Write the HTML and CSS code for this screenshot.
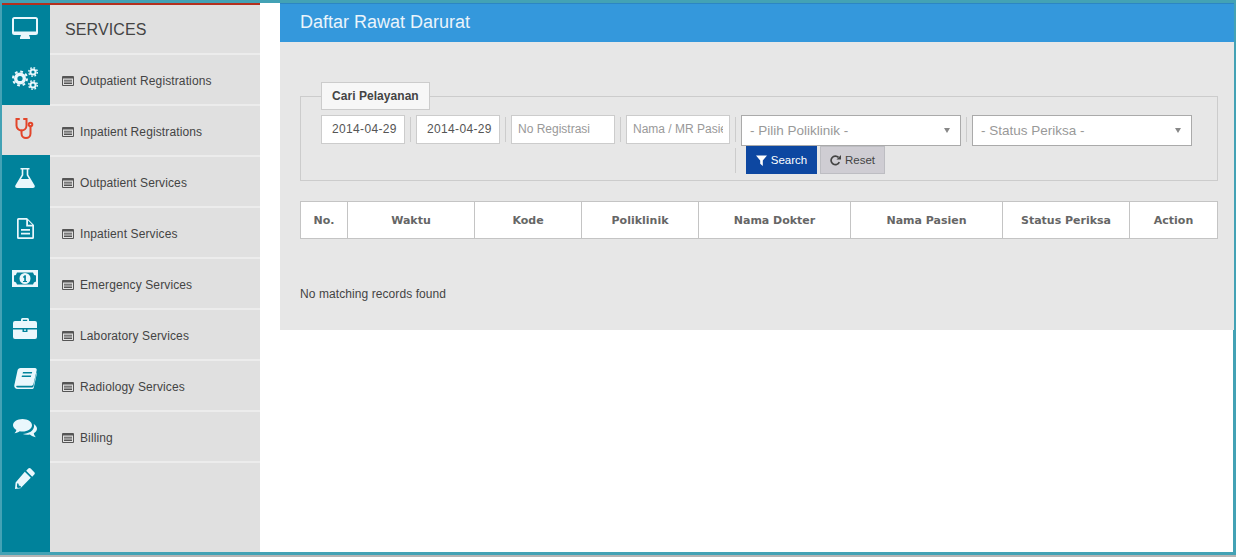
FILE: index.html
```html
<!DOCTYPE html>
<html lang="en">
<head>
    <meta charset="UTF-8">
    <title>Daftar Rawat Darurat</title>
    <link rel="stylesheet" href="styles.css">
</head>
<body>
    <svg class="defs" width="0" height="0">
        <symbol id="list-alt" viewBox="0 0 12 10">
            <path fill-rule="evenodd" d="M1 0h10a1 1 0 0 1 1 1v8a1 1 0 0 1-1 1H1a1 1 0 0 1-1-1V1a1 1 0 0 1 1-1zM1 2.500v6.500h10V2.500zM2 3.800h8v1H2zM2 5.400h8v1H2zM2 7h8v1H2z"/>
        </symbol>
    </svg>
    <div class="frame">
        <aside class="sidebar">
            <nav class="rail">
                <a class="rail-item">
                    <svg width="26" height="22" viewBox="0 0 26 22"><path fill-rule="evenodd" d="M2.500 0h21A2.500 2.500 0 0 1 26 2.500v13a2.500 2.500 0 0 1-2.500 2.500H17l1 2.500v1.500H8v-1.500L9 18H2.500A2.500 2.500 0 0 1 0 15.500v-13A2.500 2.500 0 0 1 2.500 0zM2 2v12.500h22V2z"/></svg>
                </a>
                <a class="rail-item">
                    <svg width="26" height="24" viewBox="0 0 26 24">
                        <g fill="none" stroke="#eaf7fc">
                            <circle cx="8" cy="12.500" r="4.300" stroke-width="3.400"/>
                            <circle cx="8" cy="12.500" r="7" stroke-width="2" stroke-dasharray="2.750 2.750"/>
                            <circle cx="21" cy="6" r="2.600" stroke-width="2"/>
                            <circle cx="21" cy="6" r="4.300" stroke-width="1.400" stroke-dasharray="1.690 1.690"/>
                            <circle cx="21" cy="19" r="2.600" stroke-width="2"/>
                            <circle cx="21" cy="19" r="4.300" stroke-width="1.400" stroke-dasharray="1.690 1.690"/>
                        </g>
                    </svg>
                </a>
                <a class="rail-item active">
                    <svg width="20" height="21" viewBox="0 0 20 21"><g fill="none" stroke="#e2452a" stroke-width="2" stroke-linecap="round"><path d="M4 1H1.500v6.500a5 5 0 0 0 10 0V1H9"/><path d="M6.500 12.500v3a4.500 4.500 0 0 0 9 0V8.500"/><circle cx="15.500" cy="6.500" r="1.800"/></g></svg>
                </a>
                <a class="rail-item">
                    <svg width="20" height="20" viewBox="0 0 20 20"><path fill-rule="evenodd" d="M5.500 0h9v1.500H13.300v5.200l6.200 10.500c.8 1.400 0 2.800-1.500 2.800H2c-1.500 0-2.300-1.400-1.500-2.800L6.700 6.700V1.500H5.500zM8.300 1.500v5.700L6 11h8l-2.300-3.800V1.500z"/></svg>
                </a>
                <a class="rail-item">
                    <svg width="17" height="21" viewBox="0 0 17 21"><path fill-rule="evenodd" d="M1.500 0H10l7 7v12.500a1.500 1.500 0 0 1-1.500 1.500h-14A1.500 1.500 0 0 1 0 19.500v-18A1.500 1.500 0 0 1 1.500 0zM1.700 1.700v17.600h13.600V8.500H9.200V1.700zM11 2.500v4.300h4.300zM4 11h9v1.700H4zM4 14.700h9v1.700H4z"/></svg>
                </a>
                <a class="rail-item">
                    <svg width="26" height="17" viewBox="0 0 26 17"><path fill-rule="evenodd" d="M0 0h26v17H0zM5 2.500A3.500 3.500 0 0 1 2 5.500v6A3.500 3.500 0 0 1 5 14.500h16a3.500 3.500 0 0 1 3-3v-6a3.500 3.500 0 0 1-3-3zM13 3a5.500 5.500 0 1 1 0 11 5.500 5.500 0 0 1 0-11zM11.200 6.500v1.200h1V11H11v1.100h4V11h-1.100V5.200h-1.300z"/></svg>
                </a>
                <a class="rail-item">
                    <svg width="24" height="21" viewBox="0 0 24 21"><path fill-rule="evenodd" d="M8 3V1.500A1.500 1.500 0 0 1 9.500 0h5A1.500 1.500 0 0 1 16 1.500V3h6a2 2 0 0 1 2 2v5H0V5a2 2 0 0 1 2-2zM9.800 1.800V3h4.400V1.800zM0 11.500h9.500V14h5v-2.500H24V19a2 2 0 0 1-2 2H2a2 2 0 0 1-2-2zM11 11.500h2v1.200h-2z"/></svg>
                </a>
                <a class="rail-item">
                    <svg width="23" height="21" viewBox="0 0 23 21"><path fill-rule="evenodd" d="M6.500 0H21c1.300 0 2 1 1.700 2.300L19.500 16c-.3 1.200-1.200 1.800-2.500 1.800H3.200c-.8 0-1.300.7-.8 1.200.3.300.8.400 1.300.400H18c.7 0 1.200-.4 1.400-1l3.200-13.900.4.500-3.200 14.500c-.2 1-1 1.500-2 1.500H3.500C1.200 21 0 19.300.3 17.300L3.500 2.500C3.800 1 5 0 6.500 0zM9 4l-.4 1.500h9.200L18.200 4zM8 7.500l-.4 1.500h9.200l.4-1.500z"/></svg>
                </a>
                <a class="rail-item">
                    <svg width="24" height="19" viewBox="0 0 24 19"><path d="M9.500 0C14.700 0 19 2.800 19 6.300s-4.300 6.300-9.500 6.300c-1 0-1.900-.1-2.800-.3C5.300 13.400 3.500 14 1.500 14.300c1-1.100 1.700-2.200 1.900-3.400C1.300 9.700 0 8.100 0 6.300 0 2.800 4.300 0 9.500 0z"/><path d="M20.300 4.800C22.500 6 24 7.800 24 9.800c0 1.800-1.200 3.400-3.200 4.500.2 1.500.9 2.700 2 3.900-2.300-.3-4.300-1.200-5.900-2.700-.9.200-1.900.3-2.900.3-1.600 0-3-.3-4.200-.8 5.800-.2 11.500-3 11.300-8.700 0-.5-.2-1-.8-1.500z"/></svg>
                </a>
                <a class="rail-item">
                    <svg width="20" height="21" viewBox="0 0 20 21"><path fill-rule="evenodd" d="M14.500 0c.5 0 .9.200 1.200.5l3.600 3.700c.7.700.7 1.700 0 2.400l-2.100 2.100-6-6L13.300.5c.3-.3.700-.5 1.200-.5zM9.800 3.700l6 6.100L5.500 20.300 0 21l.6-6.500zM2.200 15.300l-.3 3.600 1.100 1 3.200-.4-.6-1.600-1.800-.3-.2-1.900z"/></svg>
                </a>
            </nav>
            <div class="menu">
                <h2 class="menu-title">SERVICES</h2>
                <a class="menu-item"><svg class="list-icon"><use href="#list-alt"/></svg>Outpatient Registrations</a>
                <a class="menu-item"><svg class="list-icon"><use href="#list-alt"/></svg>Inpatient Registrations</a>
                <a class="menu-item"><svg class="list-icon"><use href="#list-alt"/></svg>Outpatient Services</a>
                <a class="menu-item"><svg class="list-icon"><use href="#list-alt"/></svg>Inpatient Services</a>
                <a class="menu-item"><svg class="list-icon"><use href="#list-alt"/></svg>Emergency Services</a>
                <a class="menu-item"><svg class="list-icon"><use href="#list-alt"/></svg>Laboratory Services</a>
                <a class="menu-item"><svg class="list-icon"><use href="#list-alt"/></svg>Radiology Services</a>
                <a class="menu-item"><svg class="list-icon"><use href="#list-alt"/></svg>Billing</a>
            </div>
        </aside>
        <main class="content">
            <header class="page-header">
                <h1>Daftar Rawat Darurat</h1>
            </header>
            <section class="panel">
                <fieldset class="filter">
                    <legend>Cari Pelayanan</legend>
                    <div class="filter-row">
                        <input class="field field-date" type="text" value="2014-04-29">
                        <span class="sep"></span>
                        <input class="field field-date" type="text" value="2014-04-29">
                        <span class="sep"></span>
                        <input class="field field-text" type="text" placeholder="No Registrasi">
                        <span class="sep"></span>
                        <input class="field field-text" type="text" placeholder="Nama / MR Pasien">
                        <span class="sep"></span>
                        <div class="select"><span>- Pilih Poliklinik -</span><i class="caret"></i></div>
                        <span class="sep"></span>
                        <div class="select"><span>- Status Periksa -</span><i class="caret"></i></div>
                    </div>
                    <div class="filter-row filter-actions">
                        <span class="sep"></span>
                        <button class="btn btn-search" type="button">
                            <svg width="11" height="11" viewBox="0 0 11 11"><path fill="#fff" d="M0 .5h11L6.800 5.500V11L4.200 8.800V5.500z"/></svg>Search
                        </button>
                        <button class="btn btn-reset" type="button">
                            <svg width="11" height="11" viewBox="0 0 11 11"><path fill="none" stroke="#444" stroke-width="1.700" d="M9.300 7.200A4.300 4.300 0 1 1 8.500 2.400"/><path fill="#444" d="M11 0v4.500H6.500z"/></svg>Reset
                        </button>
                    </div>
                </fieldset>
                <table class="records">
                    <thead>
                        <tr>
                            <th class="col-no">No.</th>
                            <th class="col-waktu">Waktu</th>
                            <th class="col-kode">Kode</th>
                            <th class="col-poli">Poliklinik</th>
                            <th class="col-nama">Nama Dokter</th>
                            <th class="col-nama">Nama Pasien</th>
                            <th class="col-waktu">Status Periksa</th>
                            <th class="col-action">Action</th>
                        </tr>
                    </thead>
                </table>
                <p class="empty">No matching records found</p>
            </section>
        </main>
    </div>
</body>
</html>
```

FILE: styles.css
```css
html, body, h1, h2, p, fieldset, legend {
    margin: 0;
    padding: 0;
}

body {
    font-family: "Liberation Sans", Arial, sans-serif;
    background-color: #b4b4b4;
    color: #444;
    height: 557px;
    overflow: hidden;
}

.defs {
    position: absolute;
}

.frame {
    display: flex;
    box-sizing: border-box;
    height: 555px;
    border-style: solid;
    border-color: #43a2b5;
    border-width: 3px 3px 3px 2px;
    background-color: #fff;
}

.sidebar {
    display: flex;
    flex-shrink: 0;
    width: 258px;
    border-top: 2px solid #b5301e;
}

.rail {
    width: 48px;
    background-color: #00829b;
}

.rail-item {
    display: flex;
    align-items: center;
    justify-content: center;
    box-sizing: border-box;
    height: 50px;
    padding-bottom: 4px;
    padding-right: 2px;
}

.rail-item svg {
    fill: #eaf7fc;
}

.rail-item.active {
    background-color: #e0e0e0;
}

.menu {
    flex: 1;
    background-color: #e0e0e0;
}

.menu-title {
    box-sizing: border-box;
    height: 50px;
    padding: 15px 0 0 15px;
    font-size: 16px;
    font-weight: normal;
    line-height: 20px;
    letter-spacing: .1px;
    color: #444;
    border-bottom: 2px solid #ececec;
}

.menu-item {
    display: flex;
    align-items: center;
    box-sizing: border-box;
    height: 51px;
    padding: 2px 0 0 12px;
    font-size: 12px;
    letter-spacing: .12px;
    color: #444;
    border-bottom: 2px solid #ececec;
}

.list-icon {
    width: 12px;
    height: 10px;
    margin-right: 6px;
    fill: #555;
}

.content {
    flex: 1;
    padding-left: 20px;
}

.page-header {
    box-sizing: border-box;
    height: 39px;
    padding: 7px 0 0 20px;
    background-color: #3498dc;
    border-top: 1px solid #2c86c4;
}

.page-header h1 {
    font-size: 18px;
    font-weight: normal;
    line-height: 22px;
    color: #eaf4fb;
}

.panel {
    box-sizing: border-box;
    height: 288px;
    padding: 40px 16px 0 20px;
    background-color: #e7e7e7;
}

.filter {
    min-width: 0;
    padding: 0 20px 6px;
    border: 1px solid #ccc;
}

.filter legend {
    box-sizing: border-box;
    width: 109px;
    height: 28px;
    padding: 0 0 0 10px;
    font-size: 12px;
    font-weight: bold;
    line-height: 26px;
    letter-spacing: .05px;
    color: #444;
    background-color: #f7f7f7;
    border: 1px solid #ccc;
}

.filter-row {
    display: flex;
    align-items: flex-start;
}

.filter-row:first-of-type {
    margin-top: 5px;
}

.filter-actions {
    margin-left: 414px;
}

.sep {
    width: 1px;
    height: 25px;
    margin: 2px 5px 0;
    background-color: #ccc;
}

.filter-actions .sep {
    margin-left: 0;
    margin-right: 10px;
}

.field {
    box-sizing: border-box;
    height: 29px;
    padding: 0 0 2px 10px;
    font-family: inherit;
    font-size: 12px;
    color: #555;
    background-color: #fff;
    border: 1px solid #ccc;
    outline: none;
}

.field-date {
    width: 84px;
    letter-spacing: .35px;
}

.field-text {
    width: 104px;
    padding: 0 6px 2px;
}

.field::placeholder {
    color: #999;
    opacity: 1;
}

.select {
    display: flex;
    align-items: center;
    justify-content: space-between;
    box-sizing: border-box;
    width: 220px;
    height: 31px;
    padding: 0 10px 0 8px;
    font-size: 13.500px;
    color: #999;
    background-color: #fff;
    border: 1px solid #aaa;
}

.caret {
    width: 0;
    height: 0;
    border-style: solid;
    border-width: 5px 3.500px 0;
    border-color: #888 transparent transparent;
}

.btn {
    display: flex;
    align-items: center;
    gap: 4px;
    box-sizing: border-box;
    height: 28px;
    padding: 0;
    justify-content: center;
    font-family: inherit;
    font-size: 11.500px;
    border: 1px solid transparent;
}

.btn-search {
    width: 71px;
    margin-right: 3px;
    color: #fff;
    background-color: #0d47a1;
}

.btn-reset {
    width: 65px;
    color: #444;
    background-color: #cfcdd3;
    border-color: #bdbdc2;
}

.records {
    width: 917px;
    margin-top: 20px;
    table-layout: fixed;
    border-collapse: collapse;
    background-color: #fff;
}

.records th {
    box-sizing: border-box;
    height: 37px;
    padding: 0;
    font-family: "DejaVu Sans", Verdana, sans-serif;
    font-size: 11px;
    font-weight: bold;
    color: #666;
    border: 1px solid #c4c4c4;
}

.col-no { width: 47px; }
.col-waktu { width: 127px; }
.col-kode { width: 107px; }
.col-poli { width: 117px; }
.col-nama { width: 152px; }
.col-action { width: 88px; }

.empty {
    margin-top: 48px;
    font-size: 12px;
    line-height: 14px;
    letter-spacing: .08px;
    color: #444;
}
```
